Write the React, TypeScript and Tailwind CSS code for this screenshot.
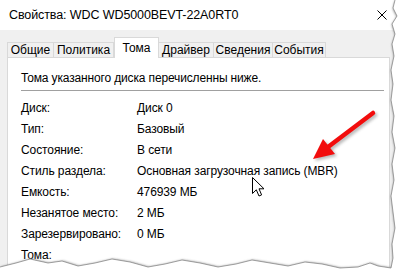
import React from "react";

const tabs = [
  { name: "Общие", w: 47 },
  { name: "Политика", w: 61 },
  { name: "Тома", w: 45, active: true },
  { name: "Драйвер", w: 56 },
  { name: "Сведения", w: 60 },
  { name: "События", w: 54 },
];

const rows: [string, string][] = [
  ["Диск:", "Диск 0"],
  ["Тип:", "Базовый"],
  ["Состояние:", "В сети"],
  ["Стиль раздела:", "Основная загрузочная запись (MBR)"],
  ["Емкость:", "476939 МБ"],
  ["Незанятое место:", "2 МБ"],
  ["Зарезервировано:", "0 МБ"],
  ["Тома:", ""],
];

const rightTear: [number, number][] = [
  [395, 0], [393, 8], [397, 16], [392, 24], [395, 34], [392, 44], [394, 56], [391, 70],
  [393, 84], [391, 100], [394, 116], [392, 132], [395, 148], [392, 164], [394, 180],
  [391, 196], [393, 212], [395, 228], [392, 244], [393, 258], [391, 268],
];
const bottomTear: [number, number][] = [
  [378, 266], [370, 263], [358, 267], [340, 268], [322, 264], [305, 262], [288, 266],
  [270, 263], [252, 260], [236, 264], [218, 267], [200, 263], [182, 260], [165, 264],
  [148, 267], [130, 262], [112, 259], [95, 263], [78, 266], [62, 261], [48, 263],
  [30, 259], [16, 263], [0, 267],
];

function TearOverlay() {
  const line = [...rightTear, ...bottomTear];
  const lineStr = line.map((p) => p.join(",")).join(" ");
  const fill = `${lineStr} 0,272 400,272 400,0`;
  return (
    <svg className="absolute inset-0 pointer-events-none" width={400} height={272} viewBox="0 0 400 272">
      <defs>
        <filter id="tearShadow" x="-10%" y="-10%" width="120%" height="120%">
          <feGaussianBlur stdDeviation="1" />
        </filter>
      </defs>
      <polyline points={lineStr} fill="none" stroke="#9a9a9a" strokeWidth={2.5} filter="url(#tearShadow)" transform="translate(1,1)" />
      <polygon points={fill} fill="#ffffff" />
      <polyline points={lineStr} fill="none" stroke="#8a8a8a" strokeWidth={0.8} />
    </svg>
  );
}

function Arrow() {
  return (
    <svg className="absolute inset-0 pointer-events-none" width={400} height={272} viewBox="0 0 400 272">
      <defs>
        <filter id="arrowShadow" x="-20%" y="-20%" width="140%" height="140%">
          <feGaussianBlur stdDeviation="1.5" />
        </filter>
      </defs>
      <g filter="url(#arrowShadow)" transform="translate(2,2)" opacity={0.45}>
        <line x1={373} y1={113} x2={328} y2={147} stroke="#666" strokeWidth={4.5} strokeLinecap="round" />
        <polygon points="313,159 335,154 323,139" fill="#666" />
      </g>
      <line x1={373} y1={113} x2={328} y2={147} stroke="#f20d0d" strokeWidth={4.5} strokeLinecap="round" />
      <polygon points="313,159 335,154 323,139" fill="#f20d0d" />
    </svg>
  );
}

function Cursor() {
  return (
    <svg className="absolute pointer-events-none left-[252px] top-[177px]" width={14} height={21} viewBox="0 0 14 21">
      <path d="M0.5 0.5 L0.5 16.5 L4.3 12.8 L7 19 L9.6 17.9 L7 11.8 L12 11.8 Z" fill="#ffffff" stroke="#000000" strokeWidth={1} strokeLinejoin="miter" />
    </svg>
  );
}

export default function App() {
  return (
    <div className="relative w-[400px] h-[272px] overflow-hidden bg-white text-black font-['Liberation_Sans',Arial,sans-serif] text-[12px] leading-none">
      {/* title bar */}
      <div className="h-[30px] flex items-center justify-between pl-[9px] pr-[13px] bg-white">
        <span className="text-[12.5px] tracking-[-0.1px]">Свойства: WDC WD5000BEVT-22A0RT0</span>
        <svg width={10} height={10} viewBox="0 0 10 10">
          <path d="M0.5 0.5 L9.5 9.5 M9.5 0.5 L0.5 9.5" stroke="#000" strokeWidth={1} />
        </svg>
      </div>
      {/* body */}
      <div className="h-[242px] bg-[#f0f0f0] pl-[7px] pr-[10px] pt-[7px] flex flex-col">
        <div className="flex items-end h-[21px] relative z-10 -mb-px">
          {tabs.map((t) =>
            t.active ? (
              <div
                key={t.name}
                style={{ width: t.w }}
                className="h-[21px] bg-white border border-b-0 border-[#d9d9d9] flex items-center justify-center pb-[1px]"
              >
                {t.name}
              </div>
            ) : (
              <div
                key={t.name}
                style={{ width: t.w }}
                className="h-[16px] -ml-px first:ml-0 border border-[#d9d9d9] bg-[#f0f0f0] flex items-center justify-center"
              >
                {t.name}
              </div>
            )
          )}
        </div>
        <div className="flex-1 bg-white border border-[#d9d9d9] pl-[13px] pr-[5px] pt-[14px]">
          <div className="h-[12px] flex items-center tracking-[-0.15px]">Тома указанного диска перечисленны ниже.</div>
          <div className="mt-[6px] h-px bg-[#a0a0a0]" />
          <div className="mt-[6px] grid grid-cols-[116px_1fr] auto-rows-[21px] items-center tracking-[-0.1px]">
            {rows.map(([k, v]) => (
              <React.Fragment key={k}>
                <div>{k}</div>
                <div>{v}</div>
              </React.Fragment>
            ))}
          </div>
        </div>
      </div>
      <Arrow />
      <Cursor />
      <TearOverlay />
    </div>
  );
}
